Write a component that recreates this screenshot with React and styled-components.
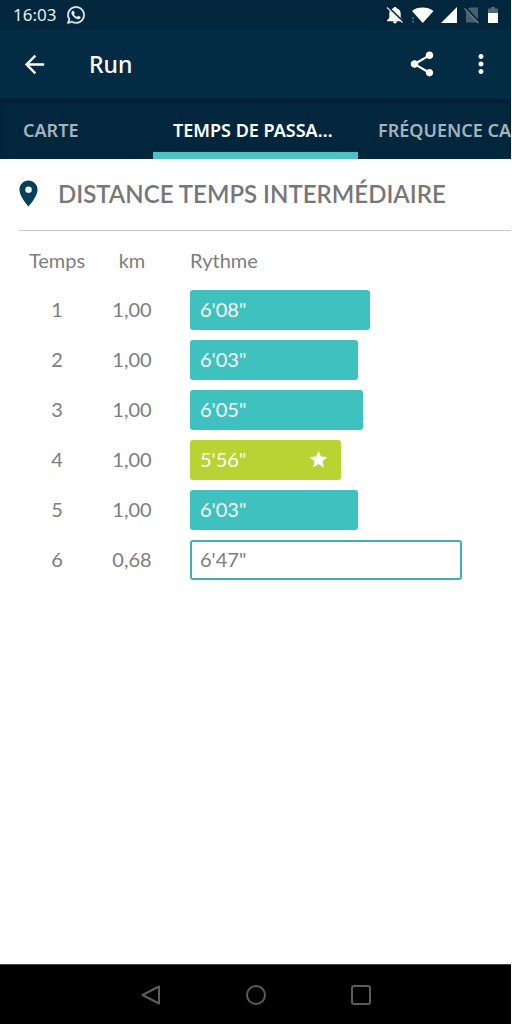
import React from "react";
import styled, { createGlobalStyle } from "styled-components";
import { FaWhatsapp } from "react-icons/fa";
import {
  MdArrowBack,
  MdLocationOn,
  MdMoreVert,
  MdShare,
  MdStar,
} from "react-icons/md";

const GlobalStyle = createGlobalStyle`
  * {
    box-sizing: border-box;
  }
  body {
    margin: 0;
    background-color: #fff;
    font-family: "Lato", sans-serif;
  }
`;

const Screen = styled.div`
  display: flex;
  flex-direction: column;
  min-height: 100vh;
  padding-right: 1px;
  overflow: hidden;
`;

const StatusBar = styled.div`
  display: flex;
  align-items: center;
  height: 29px;
  padding: 0 11px 0 13px;
  background-color: #02263c;
  color: #e6edf2;
  font-family: "Noto Sans", sans-serif;
  font-size: 17px;
`;

const Clock = styled.span`
  margin-right: 10px;
`;

const StatusIcons = styled.div`
  display: flex;
  align-items: center;
  gap: 6px;
  margin-left: auto;
`;

const AppBar = styled.header`
  display: flex;
  align-items: center;
  height: 70px;
  padding: 0 15px 0 20px;
  background-color: #032b43;
  color: #fff;
`;

const Title = styled.h1`
  flex: 1;
  margin: 0 0 0 40px;
  font-family: "Noto Sans", sans-serif;
  font-size: 23px;
  font-weight: 500;
  line-height: 32px;
`;

const IconButton = styled.button`
  display: flex;
  padding: 0;
  border: 0;
  background: none;
  color: inherit;
  cursor: pointer;
`;

const Actions = styled.div`
  display: flex;
  gap: 29px;
`;

const Tabs = styled.div`
  display: flex;
  height: 60px;
  background-color: #02263c;
  box-shadow: inset 0 3px 3px rgba(0, 20, 32, 0.4);
  overflow: hidden;
`;

const Tab = styled.button`
  flex: none;
  min-width: ${(props) => (props.$first ? "153px" : "205px")};
  padding: 8px 20px 0 ${(props) => (props.$first ? "23px" : "20px")};
  border: 0;
  border-bottom: 7px solid ${(props) => (props.$active ? "#4fc1c0" : "transparent")};
  background: none;
  color: ${(props) => (props.$active ? "#fff" : "#a4b3bd")};
  font-family: "Noto Sans", sans-serif;
  font-size: 18px;
  font-weight: 600;
  line-height: 24px;
  text-align: left;
  white-space: nowrap;
  cursor: pointer;
`;

const Content = styled.main`
  flex: 1;
`;

const SectionTitle = styled.h2`
  display: flex;
  align-items: center;
  gap: 14px;
  height: 72px;
  margin: 0 0 0 19px;
  padding-bottom: 2px;
  border-bottom: 1px solid #c6c6c6;
  color: #777;
  font-size: 24px;
  font-weight: 600;
  white-space: nowrap;

  svg {
    flex: none;
    margin-left: -6px;
    color: #043f5b;
  }
`;

const SplitTable = styled.table`
  width: 100%;
  border-collapse: collapse;
  table-layout: fixed;
  color: #7d7d7d;
  font-size: 20px;
`;

const HeadCell = styled.th`
  width: ${(props) => props.$width || "auto"};
  height: 54px;
  padding: ${(props) => props.$padding || "4px 0 0"};
  font-weight: 400;
  text-align: ${(props) => (props.$left ? "left" : "center")};
`;

const Cell = styled.td`
  height: 50px;
  padding: ${(props) => props.$padding || "0 0 2px"};
  text-align: center;
`;

const Bar = styled.div`
  display: flex;
  align-items: center;
  justify-content: space-between;
  height: 40px;
  padding: 0 12px 2px ${(props) => (props.$kind === "partial" ? "8px" : "10px")};
  border: ${(props) => (props.$kind === "partial" ? "2px solid #42aeb2" : "0")};
  border-radius: 3px;
  background-color: ${(props) =>
    ({ best: "#b8d332", partial: "#fff" })[props.$kind] || "#3fc1bf"};
  color: ${(props) => (props.$kind === "partial" ? "#7d7d7d" : "#fff")};
`;

const NavBar = styled.nav`
  display: flex;
  align-items: center;
  justify-content: center;
  gap: 81px;
  height: 60px;
  border-top: 1px solid #444;
  background-color: #000;
  color: #5c5c5c;
`;

const splits = [
  { id: 1, km: "1,00", pace: "6'08\"", seconds: 368 },
  { id: 2, km: "1,00", pace: "6'03\"", seconds: 363 },
  { id: 3, km: "1,00", pace: "6'05\"", seconds: 365 },
  { id: 4, km: "1,00", pace: "5'56\"", seconds: 356, kind: "best" },
  { id: 5, km: "1,00", pace: "6'03\"", seconds: 363 },
  { id: 6, km: "0,68", pace: "6'47\"", seconds: 407, kind: "partial" },
];

const slowest = Math.max(...splits.map((split) => split.seconds));

// every second gained on the slowest split shortens the bar
const barWidth = (seconds) => `${100 - (slowest - seconds) * 0.87}%`;

const StatusGlyphs = () => (
  <StatusIcons>
    <svg width="18" height="18" viewBox="0 0 18 18">
      <path
        d="M9 1c-1 0-1.600.6-1.600 1.300C4.800 3 3.300 5 3.300 7.500V12L1 14.200V15.200h16v-1L14.700 12V7.500C14.700 5 13.200 3 10.600 2.300 10.600 1.600 10 1 9 1zM7 15.500a2 2 0 0 0 4 0z"
        fill="#fff"
      />
      <path d="M2 1l15.500 15" stroke="#02263c" strokeWidth="2" />
      <path d="M1 1.500l15.500 15" stroke="#dfe6ea" strokeWidth="1.200" />
    </svg>
    <svg width="24" height="18" viewBox="0 0 24 18">
      <path d="M2 5C7.500.4 17.500.4 23.500 5L12.800 17z" fill="#fff" />
      <path d="M3 11v2M3 14.500v2" stroke="#4c6474" strokeWidth="2" />
    </svg>
    <svg width="17" height="18" viewBox="0 0 17 18">
      <path d="M17 1v16H1z" fill="#fff" />
    </svg>
    <svg width="17" height="18" viewBox="0 0 17 18">
      <path d="M6.500 1.500H15v15H3V5z" fill="#48606f" />
      <path d="M2.500 1.500l13.500 14.500" stroke="#02263c" strokeWidth="2" />
      <path d="M1.500 2.500l14 14.500" stroke="#6b7f8b" strokeWidth="1.200" />
    </svg>
    <svg width="14" height="18" viewBox="0 0 14 18">
      <path d="M5 1h4v1.500h3V8H2V2.500h3z" fill="#526978" />
      <path d="M2 7h10v10H2z" fill="#fff" />
    </svg>
  </StatusIcons>
);

const App = () => {
  return (
    <Screen>
      <GlobalStyle />
      <StatusBar>
        <Clock>16:03</Clock>
        <FaWhatsapp size={20} stroke="currentColor" strokeWidth={10} />
        <StatusGlyphs />
      </StatusBar>
      <AppBar>
        <IconButton aria-label="Retour">
          <MdArrowBack size={29} />
        </IconButton>
        <Title>Run</Title>
        <Actions>
          <IconButton aria-label="Partager">
            <MdShare size={30} />
          </IconButton>
          <IconButton aria-label="Plus">
            <MdMoreVert size={30} />
          </IconButton>
        </Actions>
      </AppBar>
      <Tabs role="tablist">
        <Tab role="tab" $first>
          CARTE
        </Tab>
        <Tab role="tab" aria-selected="true" $active>
          TEMPS DE PASSA…
        </Tab>
        <Tab role="tab">FRÉQUENCE CARDIAQUE</Tab>
      </Tabs>
      <Content>
        <SectionTitle>
          <MdLocationOn size={31} />
          DISTANCE TEMPS INTERMÉDIAIRE
        </SectionTitle>
        <SplitTable>
          <thead>
            <tr>
              <HeadCell $width="94px" $padding="4px 0 0 20px">
                Temps
              </HeadCell>
              <HeadCell $width="76px">km</HeadCell>
              <HeadCell $padding="4px 49px 0 20px" $left>
                Rythme
              </HeadCell>
            </tr>
          </thead>
          <tbody>
            {splits.map((split) => (
              <tr key={split.id}>
                <Cell $padding="0 0 2px 20px">{split.id}</Cell>
                <Cell>{split.km}</Cell>
                <Cell $padding="0 49px 0 20px">
                  <Bar
                    $kind={split.kind}
                    style={{ width: barWidth(split.seconds) }}
                  >
                    {split.pace}
                    {split.kind === "best" && <MdStar size={21} />}
                  </Bar>
                </Cell>
              </tr>
            ))}
          </tbody>
        </SplitTable>
      </Content>
      <NavBar>
        <IconButton aria-label="Précédent">
          <svg width="24" height="24" viewBox="0 0 24 24" fill="none">
            <path
              d="M20 3.500v17L3.500 12z"
              stroke="currentColor"
              strokeWidth="2"
              strokeLinejoin="round"
            />
          </svg>
        </IconButton>
        <IconButton aria-label="Accueil">
          <svg width="24" height="24" viewBox="0 0 24 24" fill="none">
            <circle cx="12" cy="12" r="9" stroke="currentColor" strokeWidth="2" />
          </svg>
        </IconButton>
        <IconButton aria-label="Applications">
          <svg width="24" height="24" viewBox="0 0 24 24" fill="none">
            <rect
              x="3"
              y="3"
              width="18"
              height="18"
              rx="2"
              stroke="currentColor"
              strokeWidth="2"
            />
          </svg>
        </IconButton>
      </NavBar>
    </Screen>
  );
};

export default App;
